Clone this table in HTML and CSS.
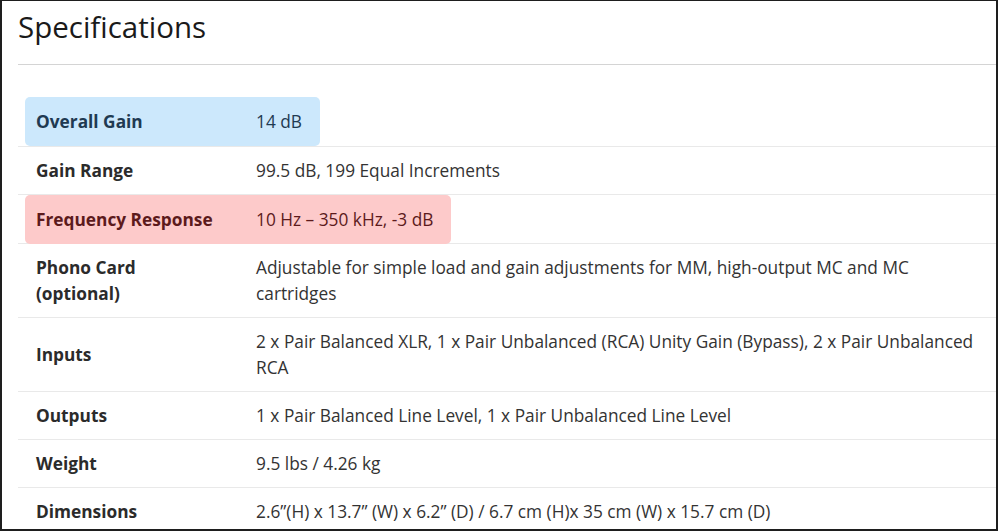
FILE: index.html
```html
<!DOCTYPE html>
<html lang="en">
<head>
<meta charset="utf-8">
<title>Specifications</title>
<link rel="stylesheet" href="styles.css">
</head>
<body>
<div class="frame">
  <h1 class="title">Specifications</h1>
  <div class="specs">
    <div class="row first">
      <div class="hl hl-blue">
        <div class="label">Overall Gain</div>
        <div class="value">14 dB</div>
      </div>
    </div>
    <div class="row">
      <div class="label">Gain Range</div>
      <div class="value">99.5 dB, 199 Equal Increments</div>
    </div>
    <div class="row">
      <div class="hl hl-red">
        <div class="label">Frequency Response</div>
        <div class="value">10 Hz – 350 kHz, -3 dB</div>
      </div>
    </div>
    <div class="row">
      <div class="label">Phono Card<br>(optional)</div>
      <div class="value">Adjustable for simple load and gain adjustments for MM, high-output MC and MC cartridges</div>
    </div>
    <div class="row">
      <div class="label">Inputs</div>
      <div class="value">2 x Pair Balanced XLR, 1 x Pair Unbalanced (RCA) Unity Gain (Bypass), 2 x Pair Unbalanced RCA</div>
    </div>
    <div class="row">
      <div class="label">Outputs</div>
      <div class="value">1 x Pair Balanced Line Level, 1 x Pair Unbalanced Line Level</div>
    </div>
    <div class="row">
      <div class="label">Weight</div>
      <div class="value">9.5 lbs / 4.26 kg</div>
    </div>
    <div class="row">
      <div class="label">Dimensions</div>
      <div class="value">2.6”(H) x 13.7” (W) x 6.2” (D) / 6.7 cm (H)x 35 cm (W) x 15.7 cm (D)</div>
    </div>
  </div>
</div>
</body>
</html>
```

FILE: styles.css
```css
html, body {
  margin: 0;
  padding: 0;
  background: #ffffff;
}

body {
  font-family: "Open Sans", "DejaVu Sans", sans-serif;
  color: #333333;
  overflow: hidden;
}

.frame {
  box-sizing: border-box;
  width: 998px;
  height: 531px;
  border: 2px solid #1e1e1e;
  border-top-width: 1px;
  overflow: hidden;
  background: #ffffff;
}

.title {
  box-sizing: border-box;
  height: 64px;
  margin: 0 0 0 16px;
  padding: 6px 0 0 0;
  font-size: 29.5px;
  font-weight: 400;
  line-height: 40px;
  color: #1a1a1a;
  border-bottom: 1px solid #d4d4d4;
}

.specs {
  margin: 32px 0 0 16px;
}

.row {
  display: flex;
  align-items: center;
  border-top: 1px solid #e9e9e9;
  font-size: 17.3px;
  line-height: 26px;
  padding: 10.5px 0;
}

.row.first {
  border-top: none;
  padding: 0 0 1px 0;
}

.row .label {
  box-sizing: border-box;
  width: 238px;
  padding-left: 18px;
  font-weight: 700;
  color: #2b2b2b;
  flex-shrink: 0;
}

.row .value {
  flex: 1;
  padding-right: 8px;
  color: #333333;
}

.row:has(.hl) {
  padding-top: 0;
  padding-bottom: 0;
}

.hl {
  display: flex;
  margin-left: 7px;
  padding: 12px 18px 11px 11px;
  border-radius: 5px;
}

.hl .label {
  width: 220px;
  padding-left: 0;
}

.hl .value {
  flex: none;
  padding-right: 0;
}

.hl-blue {
  background: #cce8fc;
}

.hl-blue .label,
.hl-blue .value {
  color: #1f3a52;
}

.hl-red {
  background: #fdcaca;
  margin-bottom: -1px;
}

.hl-red .label,
.hl-red .value {
  color: #5c1a1c;
}
```
